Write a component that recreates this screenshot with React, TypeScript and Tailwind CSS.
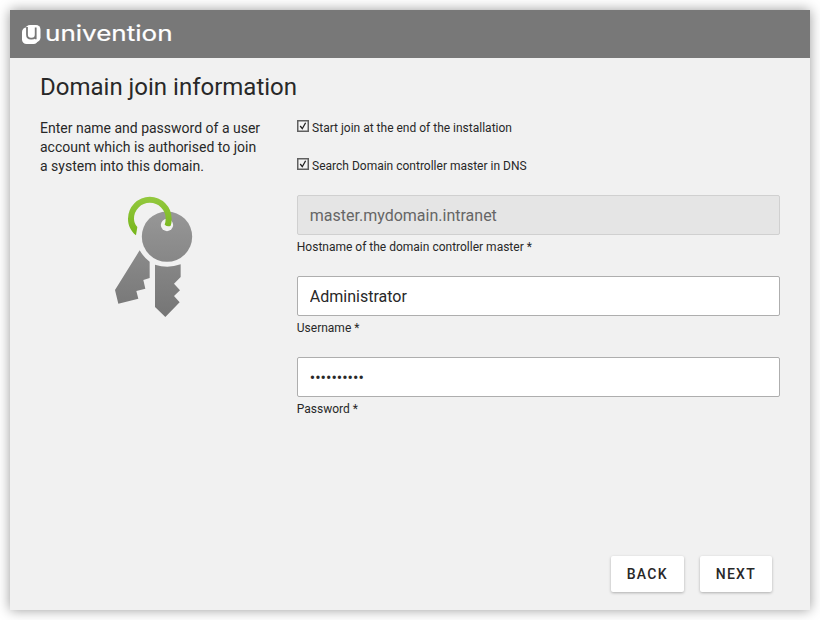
import React from "react";

function Logo() {
  return (
    <svg width="160" height="30" viewBox="0 0 160 30" className="block">
      <rect x="3.500" y="5" width="15" height="17" rx="4.500" fill="#fff" />
      <rect x="0" y="7.500" width="16" height="16.500" rx="4.500" fill="#fff" />
      <path
        d="M5 7V14.500Q5 18.600 9 18.600H9.700Q13.700 18.600 13.700 14.500V7.500M13.700 14V19.200"
        fill="none"
        stroke="#787878"
        strokeWidth="1.8"
      />
      <text
        x="23"
        y="20.7"
        fontFamily="Inter, sans-serif"
        fontSize="21.5"
        fill="#fff"
        stroke="#fff"
        strokeWidth="0.2"
        textLength="127.500"
        lengthAdjust="spacingAndGlyphs"
      >
        univention
      </text>
    </svg>
  );
}

function Keys() {
  return (
    <svg width="110" height="140" viewBox="0 0 330 420" className="block">
      <defs>
        <linearGradient id="metal" gradientUnits="userSpaceOnUse" x1="0" y1="80" x2="0" y2="396">
          <stop offset="0" stopColor="#979797" />
          <stop offset="1" stopColor="#757575" />
        </linearGradient>
        <linearGradient id="ring" gradientUnits="userSpaceOnUse" x1="0" y1="36" x2="0" y2="150">
          <stop offset="0" stopColor="#93c83e" />
          <stop offset="1" stopColor="#76b51b" />
        </linearGradient>
      </defs>
      <path
        d="M119 196Q131 217 149 230V279L130 285L136 311L109 318L115 341L55 356L45 315Z"
        fill="url(#metal)"
      />
      <path
        d="M165 239Q203 252 242 238V276L222 296L240 316L222 333L239 352L196 396L165 366Z"
        fill="url(#metal)"
      />
      <circle cx="201" cy="155" r="75.5" fill="url(#metal)" />
      <circle cx="201" cy="120" r="18.5" fill="#f1f1f1" />
      <path
        d="M108 151C92 137 84 121 84 101A65.500 65.500 0 0 1 215 101Q215 113 212 122Q203 127 194 119Q197 110 197 101A47.500 47.500 0 0 0 102 101Q102 115 112 126Z"
        fill="url(#ring)"
      />
    </svg>
  );
}

function Check({ label }: { label: string }) {
  return (
    <label className="flex h-[38px] items-start">
      <svg width="12" height="12" viewBox="0 0 12 12" className="block shrink-0">
        <rect x="0.75" y="0.75" width="10.5" height="10.5" fill="#f5f5f5" stroke="#606060" strokeWidth="1.5" />
        <path d="M3.2 6L5.300 8.700L8.600 2.800" fill="none" stroke="#222" strokeWidth="1.3" />
      </svg>
      <span className="ml-[3.300px] text-xs leading-4 whitespace-nowrap">{label}</span>
    </label>
  );
}

function Field({
  label,
  value,
  type = "text",
  disabled = false,
}: {
  label: string;
  value: string;
  type?: string;
  disabled?: boolean;
}) {
  return (
    <div className="h-[81px]">
      <input
        type={type}
        value={value}
        readOnly
        disabled={disabled}
        aria-label={label}
        className="block h-10 w-full rounded-[2px] border border-[#aeaeae] bg-white px-3 text-base text-[#282828] outline-none disabled:border-[#d0d0d0] disabled:bg-[#e5e5e5] disabled:text-[#666]"
      />
      <div className="mt-1 text-xs leading-4">{label}</div>
    </div>
  );
}

function Button({ children }: { children: React.ReactNode }) {
  return (
    <button className="h-9 rounded-[2px] bg-white px-4 text-sm font-medium tracking-[1.25px] shadow-[0_1px_3px_rgba(0,0,0,0.28)]">
      {children}
    </button>
  );
}

export default function App() {
  return (
    <div className="h-[620px] w-[820px] overflow-hidden bg-white p-2.5 font-['Roboto',sans-serif] text-[#282828]">
      <main className="flex h-[600px] w-[800px] flex-col bg-[#f1f1f1] shadow-[0_0_12px_rgba(0,0,0,0.4)]">
        <header className="h-12 shrink-0 bg-[#787878] pt-[10px] pl-3">
          <Logo />
        </header>
        <h1 className="mt-3 ml-[30px] h-[50px] text-2xl leading-[34px]">Domain join information</h1>
        <div className="flex grow px-[30px]">
          <aside className="w-[256.800px] shrink-0">
            <p className="-mt-px w-[228px] text-sm leading-[19px]">
              Enter name and password of a user
              <br />
              account which is authorised to join
              <br />a system into this domain.
            </p>
            <div className="mt-[9px] ml-[60px]">
              <Keys />
            </div>
          </aside>
          <section className="grow">
            <Check label="Start join at the end of the installation" />
            <Check label="Search Domain controller master in DNS" />
            <div className="-mt-px">
              <Field label="Hostname of the domain controller master *" value="master.mydomain.intranet" disabled />
              <Field label="Username *" value="Administrator" />
              <Field label="Password *" value="password12" type="password" />
            </div>
          </section>
        </div>
        <footer className="flex h-[54px] shrink-0 items-start justify-end gap-4 pr-[38px]">
          <Button>BACK</Button>
          <Button>NEXT</Button>
        </footer>
      </main>
    </div>
  );
}
